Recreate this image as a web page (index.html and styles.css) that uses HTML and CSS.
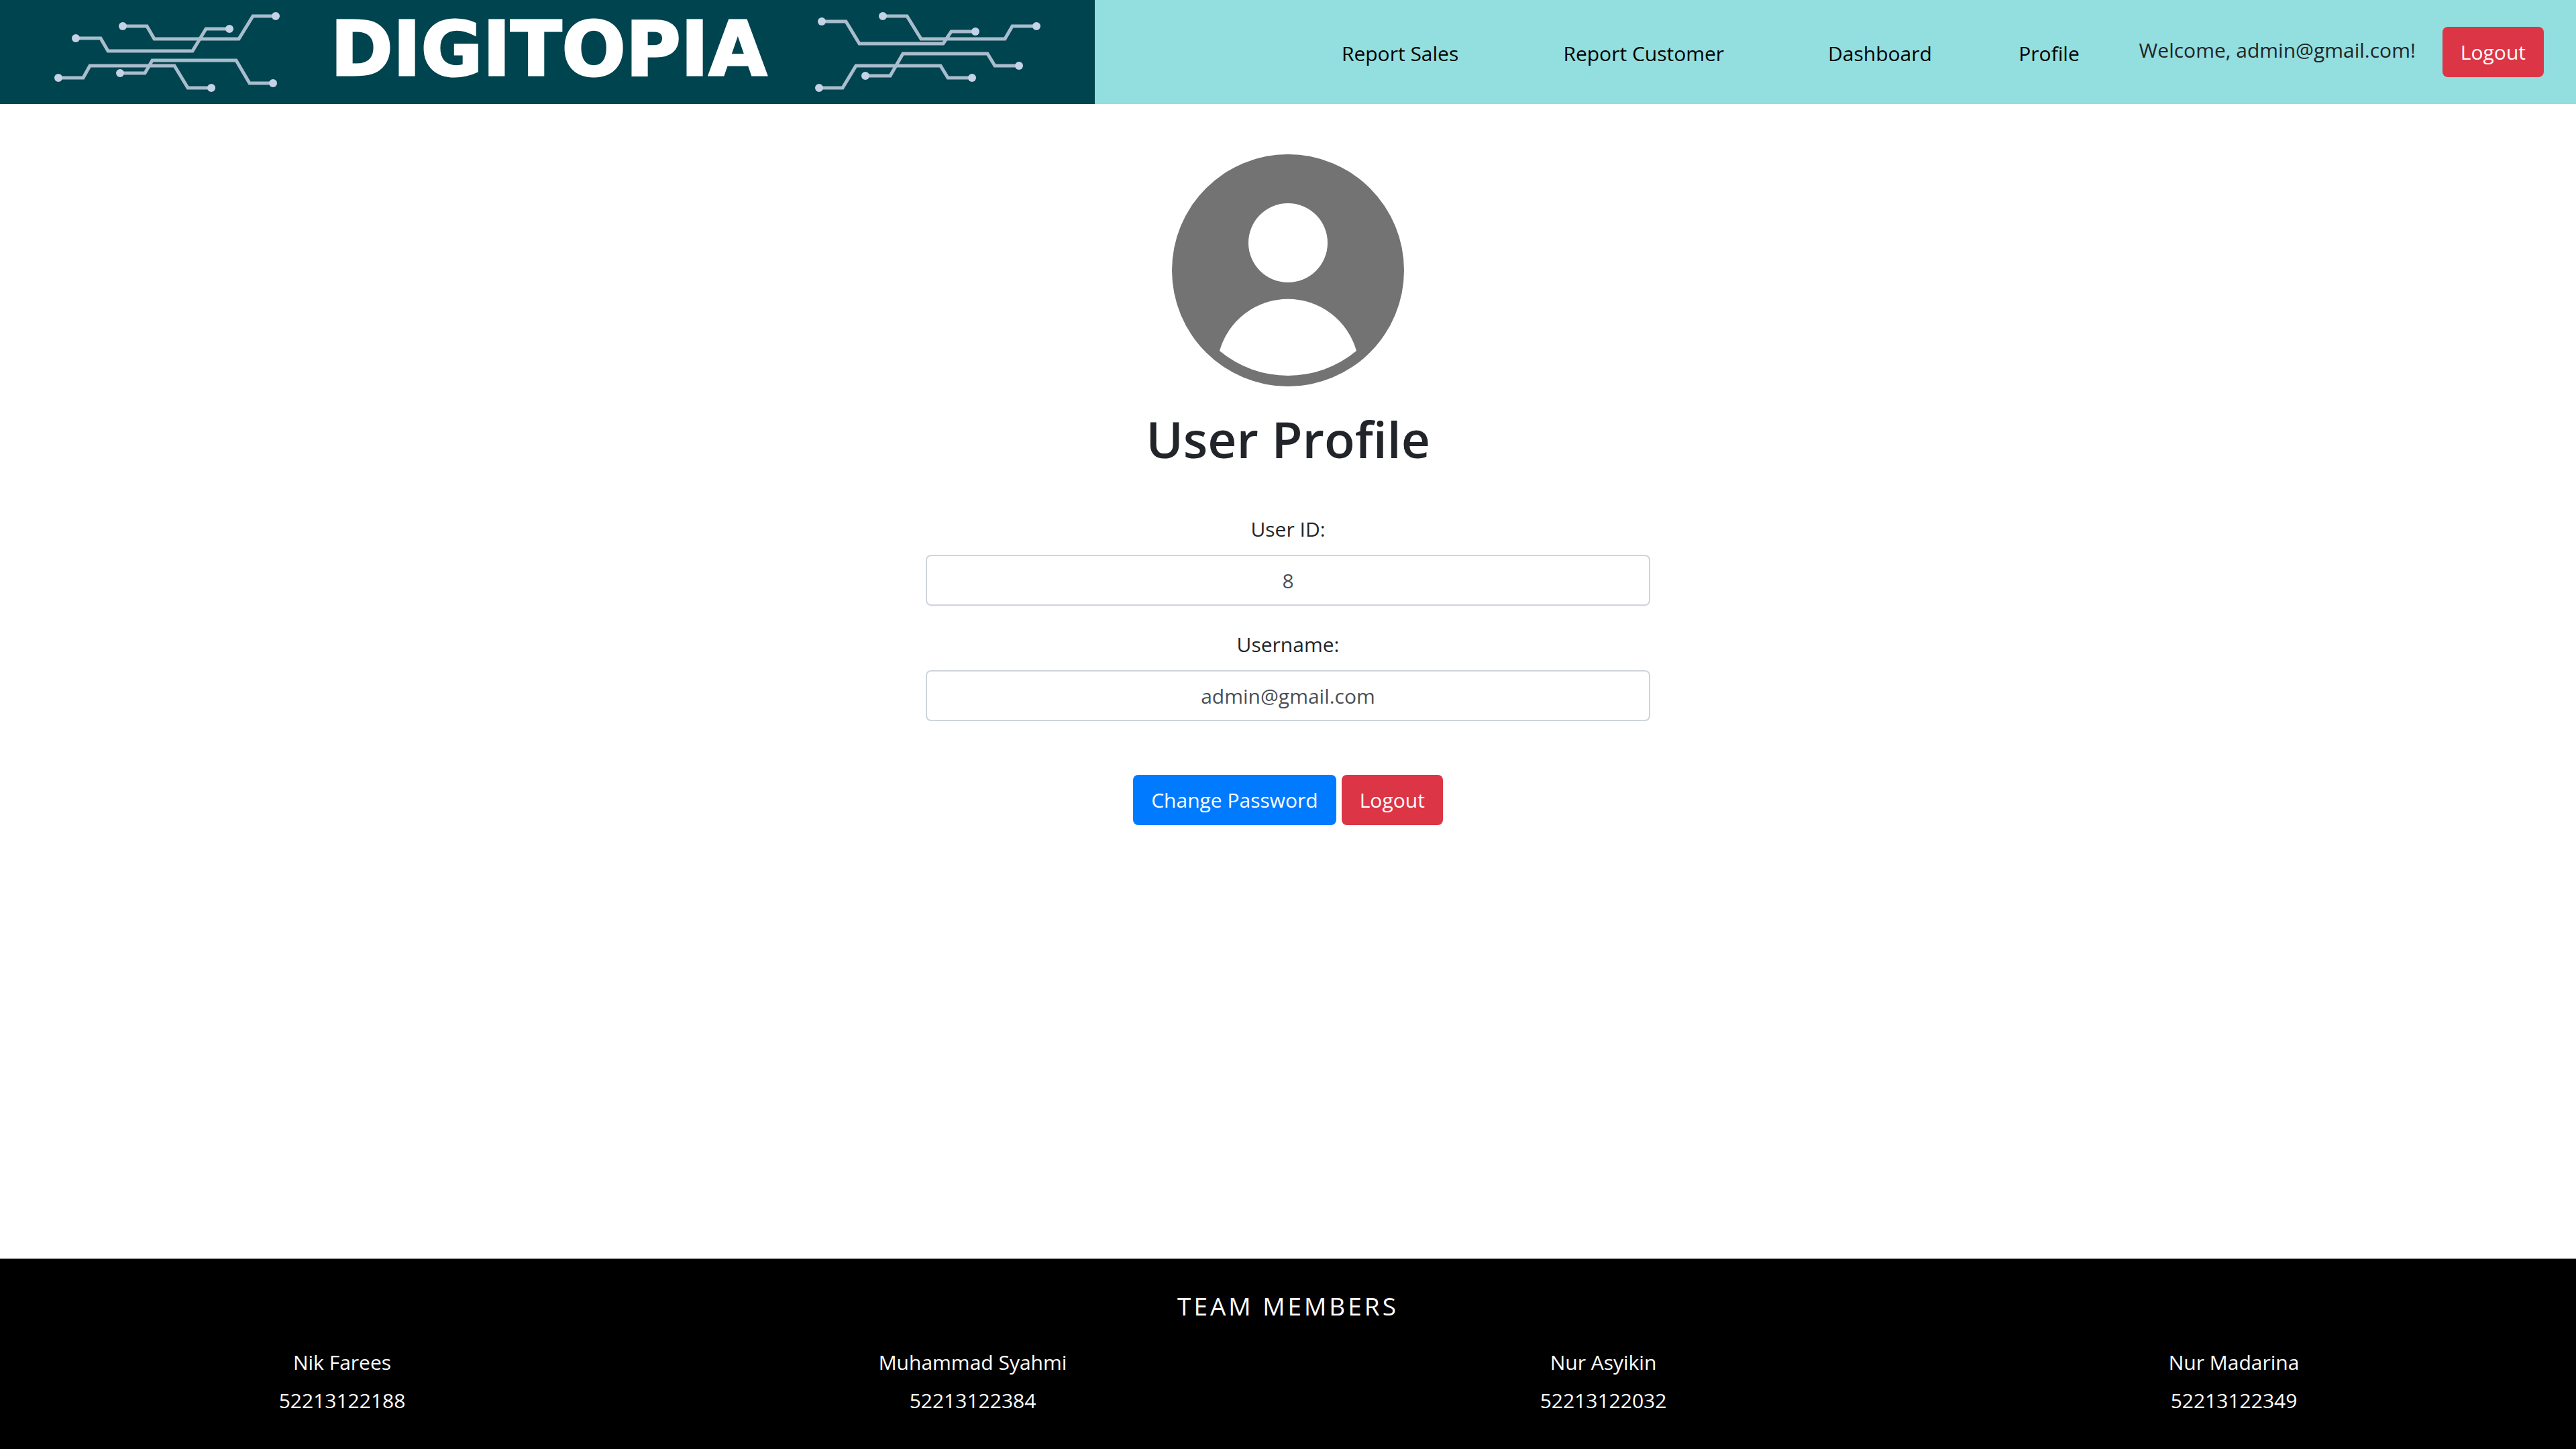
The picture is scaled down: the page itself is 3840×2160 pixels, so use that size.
FILE: index.html
```html
<!DOCTYPE html>
<html lang="en">
<head>
  <meta charset="utf-8">
  <title>User Profile</title>
  <link rel="stylesheet" href="styles.css">
</head>
<body>
  <header class="site-header">
    <a class="brand" href="#" aria-label="Digitopia home">
      <svg class="brand-art" viewBox="0 0 1632 155">
        <g class="traces">
          <path d="M183 39H219L230 58H356L377 24H411"/>
          <path d="M113 57H150L161 76H287L307 43H342"/>
          <path d="M87 116H124L134 98H260L280 131H315"/>
          <path d="M179 109H216L227 90H352L372 124H407"/>
          <path d="M1225 32H1261L1281 65H1406L1418 47H1454"/>
          <path d="M1316 24H1352L1373 58H1498L1509 39H1545"/>
          <path d="M1221 131H1256L1276 98H1402L1413 116H1449"/>
          <path d="M1290 113H1327L1346 80H1472L1483 98H1519"/>
        </g>
        <g class="nodes">
          <circle cx="183" cy="39" r="6"/><circle cx="411" cy="24" r="6"/>
          <circle cx="113" cy="57" r="6"/><circle cx="342" cy="43" r="6"/>
          <circle cx="87" cy="116" r="6"/><circle cx="315" cy="131" r="6"/>
          <circle cx="179" cy="109" r="6"/><circle cx="407" cy="124" r="6"/>
          <circle cx="1225" cy="32" r="6"/><circle cx="1454" cy="47" r="6"/>
          <circle cx="1316" cy="24" r="6"/><circle cx="1545" cy="39" r="6"/>
          <circle cx="1221" cy="131" r="6"/><circle cx="1449" cy="116" r="6"/>
          <circle cx="1290" cy="113" r="6"/><circle cx="1519" cy="98" r="6"/>
        </g>
        <text class="wordmark" x="818" y="112" text-anchor="middle">DIGITOPIA</text>
      </svg>
    </a>
    <nav class="main-nav">
      <a href="#">Report Sales</a>
      <a href="#">Report Customer</a>
      <a href="#">Dashboard</a>
      <a href="#">Profile</a>
    </nav>
    <div class="account">
      <span class="welcome">Welcome, admin@gmail.com!</span>
      <button class="btn btn-danger" type="button">Logout</button>
    </div>
  </header>

  <main class="profile">
    <svg class="avatar" viewBox="0 0 346 346" role="img" aria-label="User avatar">
      <circle cx="173" cy="173" r="173" fill="#737373"/>
      <circle cx="173" cy="132" r="59" fill="#fff"/>
      <path d="M71 293A106 106 0 0 1 275 293A159 159 0 0 1 71 293Z" fill="#fff"/>
    </svg>
    <h1 class="profile-title">User Profile</h1>
    <form class="profile-form">
      <div class="field">
        <label for="user-id">User ID:</label>
        <input id="user-id" type="text" value="8" readonly>
      </div>
      <div class="field">
        <label for="username">Username:</label>
        <input id="username" type="text" value="admin@gmail.com" readonly>
      </div>
      <div class="actions">
        <button class="btn btn-primary" type="button">Change Password</button>
        <button class="btn btn-danger" type="button">Logout</button>
      </div>
    </form>
  </main>

  <footer class="site-footer">
    <h2 class="footer-title">TEAM MEMBERS</h2>
    <div class="team">
      <div class="member"><p>Nik Farees</p><p>52213122188</p></div>
      <div class="member"><p>Muhammad Syahmi</p><p>52213122384</p></div>
      <div class="member"><p>Nur Asyikin</p><p>52213122032</p></div>
      <div class="member"><p>Nur Madarina</p><p>52213122349</p></div>
    </div>
  </footer>
</body>
</html>
```
FILE: styles.css
```css
* {
  box-sizing: border-box;
}

body {
  margin: 0;
  min-height: 100vh;
  display: flex;
  flex-direction: column;
  background: #fff;
  color: #212529;
  font-family: "Open Sans", "Noto Sans", sans-serif;
  font-size: 30px;
  line-height: 48px;
}

h1,
h2,
p {
  margin: 0;
}

.site-header {
  display: flex;
  align-items: stretch;
  background: #93dede;
}

.brand {
  flex: none;
  width: 42.5%;
  background: #00444f;
}

.brand-art {
  display: block;
  width: 100%;
}

.traces {
  fill: none;
  stroke: #a9bdcd;
  stroke-width: 5;
}

.nodes {
  fill: #c5d3e6;
}

.wordmark {
  fill: #fff;
  stroke: #fff;
  stroke-width: 3;
  font-family: "DejaVu Sans", sans-serif;
  font-size: 112px;
  font-weight: 700;
}

.main-nav {
  flex: 1;
  display: grid;
  grid-template-columns: 330fr 396fr 308fr 196fr;
  align-items: center;
  padding-left: 290px;
  padding-right: 36px;
  padding-top: 4px;
  text-align: center;
}

.main-nav a {
  color: #000;
  text-decoration: none;
  white-space: nowrap;
}

.account {
  display: flex;
  align-items: center;
  gap: 40px;
  padding-right: 48px;
}

.welcome {
  padding-bottom: 6px;
}

.btn {
  padding: 14px 27px 13px;
  border: 0;
  border-radius: 8px;
  color: #fff;
  font: inherit;
}

.btn-primary {
  background: #007bff;
}

.btn-danger {
  background: #dc3545;
}

.profile {
  flex: 1;
  display: flex;
  flex-direction: column;
  align-items: center;
  padding: 75px 40px;
  text-align: center;
}

.avatar {
  width: 346px;
}

.profile-title {
  margin-top: 30px;
  font-size: 75px;
  font-weight: 600;
  line-height: 96px;
}

.profile-form {
  width: 100%;
  max-width: 1080px;
  margin-top: 63px;
}

.field {
  margin-bottom: 34px;
}

.field label {
  display: block;
  margin-bottom: 14px;
}

.field input {
  display: block;
  width: 100%;
  height: 76px;
  padding: 12px 24px;
  border: 2px solid #ced4da;
  border-radius: 8px;
  background: #fff;
  color: #495057;
  font: inherit;
  text-align: center;
}

.actions {
  display: flex;
  justify-content: center;
  gap: 8px;
  margin-top: 80px;
}

.site-footer {
  padding: 46px 40px 48px;
  border-top: 2px solid #a6a6a6;
  background: #000;
  color: #fff;
  text-align: center;
}

.footer-title {
  font-size: 37px;
  font-weight: 400;
  letter-spacing: 4px;
}

.team {
  display: grid;
  grid-template-columns: repeat(4, 1fr);
  margin-top: 36px;
}

.member p + p {
  margin-top: 9px;
}
```
